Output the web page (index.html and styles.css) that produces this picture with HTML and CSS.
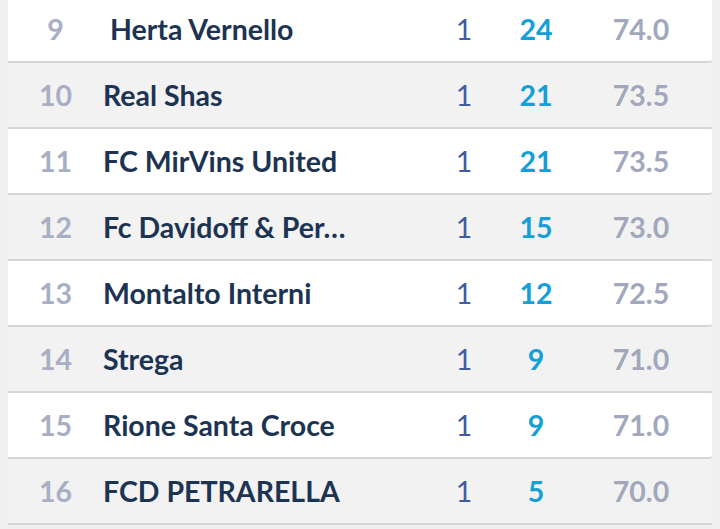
FILE: index.html
```html
<!DOCTYPE html>
<html>
<head>
<meta charset="utf-8">
<link rel="stylesheet" href="styles.css">
</head>
<body>
<div class="table">
  <div class="row row--white"><span class="rank">9</span><span class="name name--indent">Herta Vernello</span><span class="played">1</span><span class="pts">24</span><span class="score">74.0</span></div>
  <div class="row row--gray"><span class="rank">10</span><span class="name">Real Shas</span><span class="played">1</span><span class="pts">21</span><span class="score">73.5</span></div>
  <div class="row row--white"><span class="rank">11</span><span class="name">FC MirVins United</span><span class="played">1</span><span class="pts">21</span><span class="score">73.5</span></div>
  <div class="row row--gray"><span class="rank">12</span><span class="name">Fc Davidoff &amp; Per…</span><span class="played">1</span><span class="pts">15</span><span class="score">73.0</span></div>
  <div class="row row--white"><span class="rank">13</span><span class="name">Montalto Interni</span><span class="played">1</span><span class="pts">12</span><span class="score">72.5</span></div>
  <div class="row row--gray"><span class="rank">14</span><span class="name">Strega</span><span class="played">1</span><span class="pts">9</span><span class="score">71.0</span></div>
  <div class="row row--white"><span class="rank">15</span><span class="name">Rione Santa Croce</span><span class="played">1</span><span class="pts">9</span><span class="score">71.0</span></div>
  <div class="row row--gray"><span class="rank">16</span><span class="name">FCD PETRARELLA</span><span class="played">1</span><span class="pts">5</span><span class="score">70.0</span></div>
</div>
</body>
</html>
```
FILE: styles.css
```css
html, body {
  margin: 0;
  padding: 0;
  background: #f0f0f0;
  overflow: hidden;
}
body {
  font-family: Lato, "Open Sans", sans-serif;
}
.table {
  margin: -3px 8px 0 8px;
  display: flex;
  flex-direction: column;
}
.row {
  height: 64px;
  border-bottom: 2px solid #d6d6d6;
  display: grid;
  grid-template-columns: 95px 260px 71px 60px 12px 60px 30px 90px;
  align-items: center;
  font-size: 28.5px;
  font-weight: 700;
}
.row--white {
  background: #ffffff;
  border-radius: 0 3px 3px 0;
}
.row--gray {
  background: #f2f2f2;
}
.rank {
  grid-column: 1;
  text-align: center;
  color: #a8aec3;
}
.name {
  grid-column: 2;
  color: #1d3352;
  white-space: nowrap;
}
.name--indent {
  padding-left: 7px;
}
.played {
  grid-column: 4;
  text-align: center;
  font-weight: 400;
  color: #3e5c9e;
}
.pts {
  grid-column: 6;
  text-align: center;
  color: #14a0d6;
}
.score {
  grid-column: 8;
  text-align: center;
  color: #a1a8bc;
}
```
